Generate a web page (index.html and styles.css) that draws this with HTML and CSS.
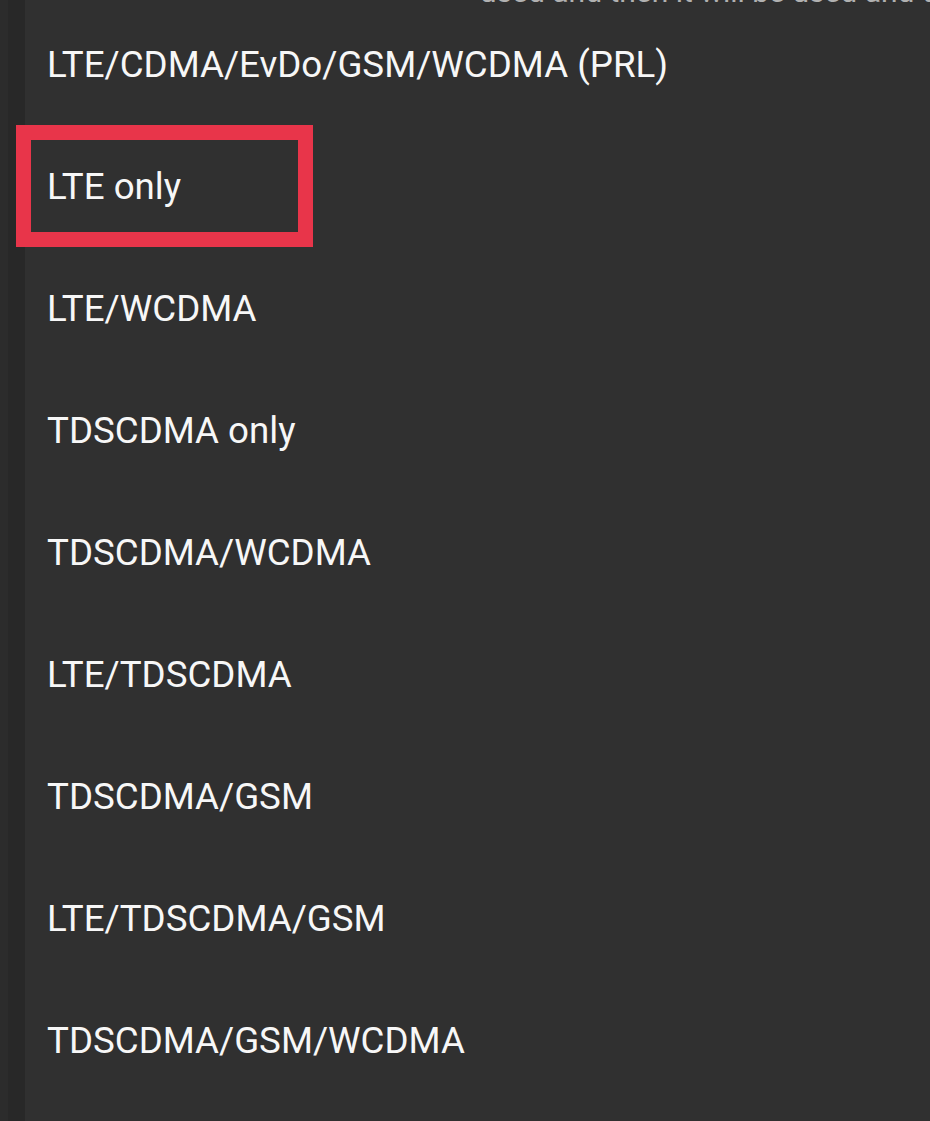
FILE: index.html
```html
<!DOCTYPE html>
<html lang="en">
<head>
<meta charset="utf-8">
<title>Preferred network type</title>
<link rel="stylesheet" href="styles.css">
</head>
<body>
<div class="screen">
  <div class="clipped"><span>used and then it will be used and then it</span></div>
  <ul class="options">
    <li class="option">LTE/CDMA/EvDo/GSM/WCDMA (PRL)</li>
    <li class="option highlighted">LTE only</li>
    <li class="option">LTE/WCDMA</li>
    <li class="option">TDSCDMA only</li>
    <li class="option">TDSCDMA/WCDMA</li>
    <li class="option">LTE/TDSCDMA</li>
    <li class="option">TDSCDMA/GSM</li>
    <li class="option">LTE/TDSCDMA/GSM</li>
    <li class="option">TDSCDMA/GSM/WCDMA</li>
  </ul>
</div>
</body>
</html>
```
FILE: styles.css
```css
html, body {
  margin: 0;
  padding: 0;
}
body {
  width: 930px;
  height: 1121px;
  overflow: hidden;
  background: linear-gradient(to right, #2c2c2c 0, #2c2c2c 8px, #282828 8px, #282828 25px, #303030 25px);
  font-family: Roboto, "Noto Sans", "Liberation Sans", sans-serif;
  color: #f7f7f7;
}
.screen {
  display: flex;
  flex-direction: column;
}
.clipped {
  height: 5px;
  overflow: hidden;
  padding-left: 480px;
  display: flex;
  align-items: flex-end;
  font-size: 30px;
  line-height: 30px;
  white-space: nowrap;
  color: #e8e8e8;
  opacity: 0.7;
}
.clipped span {
  display: block;
  margin-bottom: -2px;
}
.options {
  list-style: none;
  margin: -2px 0 0 0;
  padding: 0;
}
.option {
  height: 122px;
  display: flex;
  align-items: center;
  padding-left: 47px;
  font-size: 36.7px;
  white-space: nowrap;
  box-sizing: border-box;
}
.option.highlighted {
  margin-left: 16px;
  width: 297px;
  padding-left: 16px;
  border: 15px solid #e8354a;
}
```
